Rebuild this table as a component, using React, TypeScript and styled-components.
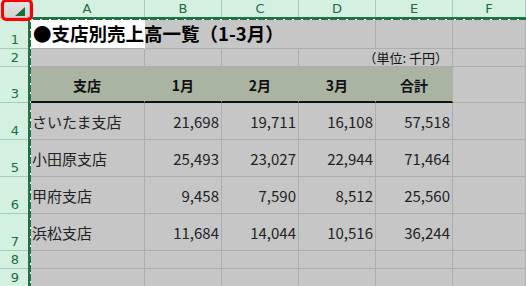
import styled, { createGlobalStyle } from "styled-components"

const GlobalStyle = createGlobalStyle`
  html, body {
    margin: 0;
    padding: 0;
    overflow: hidden;
    background: #c6c6c6;
  }
  body {
    font-family: "Noto Sans CJK JP", "Noto Sans", sans-serif;
  }
`

const columns = ["A", "B", "C", "D", "E", "F"]

const rows = [
  { name: "さいたま支店", values: ["21,698", "19,711", "16,108", "57,518"] },
  { name: "小田原支店", values: ["25,493", "23,027", "22,944", "71,464"] },
  { name: "甲府支店", values: ["9,458", "7,590", "8,512", "25,560"] },
  { name: "浜松支店", values: ["11,684", "14,044", "10,516", "36,244"] },
]

const heads = ["支店", "1月", "2月", "3月", "合計"]

export default function App() {
  return (
    <Frame>
      <GlobalStyle />
      <Sheet>
        <Corner />
        {columns.map((c) => (
          <ColHead key={c}>{c}</ColHead>
        ))}
        <ColHead />

        <RowHead>1</RowHead>
        <TitleCell>●支店別売上高一覧（1-3月）</TitleCell>
        <Cell $noRight />
        <Cell $noRight />
        <Cell />
        <Cell />
        <Cell />
        <Cell />

        <RowHead>2</RowHead>
        <Cell />
        <Cell />
        <Cell />
        <Cell $noRight />
        <UnitCell>（単位: 千円）</UnitCell>
        <Cell />
        <Cell />

        <RowHead>3</RowHead>
        {heads.map((h) => (
          <HeadCell key={h}>{h}</HeadCell>
        ))}
        <Cell />
        <Cell />

        {rows.map((r, i) => (
          <Row key={r.name} n={i + 4} name={r.name} values={r.values} />
        ))}

        {[8, 9].map((n) => (
          <Row key={n} n={n} name="" values={["", "", "", ""]} />
        ))}
      </Sheet>
      <Marquee />
      <Annotation />
    </Frame>
  )
}

function Row({ n, name, values }: { n: number; name: string; values: string[] }) {
  return (
    <>
      <RowHead>{n}</RowHead>
      <NameCell>{name}</NameCell>
      {values.map((v, i) => (
        <NumCell key={i}>{v}</NumCell>
      ))}
      <Cell />
      <Cell />
    </>
  )
}

const Frame = styled.div`
  position: relative;
  width: 526px;
  height: 286px;
  overflow: hidden;
`

const Sheet = styled.div`
  display: grid;
  grid-template-columns: 30px 115px 77px 77px 77px 77px 73px 1fr;
  grid-template-rows: 18px 31px 18px 36px 37px 37px 37px 37px 18px 18px;
  color: #222;
`

const Corner = styled.div`
  position: relative;
  background: linear-gradient(#e4e4e4, #d4d4d4);
  border-right: 1px solid #bdbdbd;
  border-bottom: 1px solid #bdbdbd;
  box-sizing: border-box;

  &::after {
    content: "";
    position: absolute;
    left: 15px;
    top: 7px;
    width: 10px;
    height: 9px;
    background: #1e6b40;
    clip-path: polygon(100% 0, 100% 100%, 0 100%);
  }
`

const ColHead = styled.div`
  background: #d3f0e0;
  color: #1e6b40;
  font-family: "DejaVu Sans", sans-serif;
  font-size: 13px;
  line-height: 18px;
  text-align: center;
  border-right: 1px solid #abc9b8;
  box-sizing: border-box;
`

const RowHead = styled.div`
  background: #d3f0e0;
  color: #1e6b40;
  font-family: "DejaVu Sans", sans-serif;
  font-size: 13px;
  border-bottom: 1px solid #abc9b8;
  box-sizing: border-box;
  display: flex;
  align-items: flex-end;
  justify-content: center;
  padding-bottom: 1px;
  line-height: 15px;
`

const Cell = styled.div<{ $noRight?: boolean }>`
  border-right: 1px solid ${(p) => (p.$noRight ? "transparent" : "#adadad")};
  border-bottom: 1px solid #adadad;
  box-sizing: border-box;
  min-width: 0;
  white-space: nowrap;
  font-size: 15px;
  display: flex;
  align-items: center;
`

const TitleCell = styled(Cell)`
  background: #fff;
  color: #000;
  font-weight: 700;
  font-size: 18.5px;
  padding-left: 3px;
  overflow: visible;
  z-index: 1;
  border-right-color: transparent;
`

const UnitCell = styled(Cell)`
  justify-content: flex-end;
  font-size: 13px;
  padding-right: 4px;
  z-index: 1;
  color: #111;
`

const HeadCell = styled(Cell)`
  background: #a9b5a2;
  border-right-color: transparent;
  border-bottom: 2px solid #111;
  justify-content: center;
  font-weight: 700;
  font-size: 14px;
  color: #111;
  padding-top: 2px;
`

const NameCell = styled(Cell)`
  padding-left: 2px;
`

const NumCell = styled(Cell)`
  justify-content: flex-end;
  padding-right: 2px;
`

// Excel's "marching ants" copy selection; only its top and left edges are on screen
const Marquee = styled.div`
  position: absolute;
  left: 28px;
  top: 17px;
  right: -10px;
  bottom: -10px;
  border-top: 3px solid #1f7244;
  border-left: 3px solid #1f7244;
  z-index: 2;

  &::before,
  &::after {
    content: "";
    position: absolute;
  }
  &::before {
    left: 0;
    right: 0;
    top: -1px;
    height: 1px;
    background: repeating-linear-gradient(90deg, #fff 0 2px, transparent 2px 9px);
  }
  &::after {
    top: 0;
    bottom: 0;
    left: -1px;
    width: 1px;
    background: repeating-linear-gradient(180deg, #fff 0 2px, transparent 2px 9px);
  }
`

const Annotation = styled.div`
  position: absolute;
  left: 1px;
  top: -1px;
  width: 32px;
  height: 22px;
  box-sizing: border-box;
  border: 3px solid #f00;
  border-radius: 5px;
  z-index: 3;
`
